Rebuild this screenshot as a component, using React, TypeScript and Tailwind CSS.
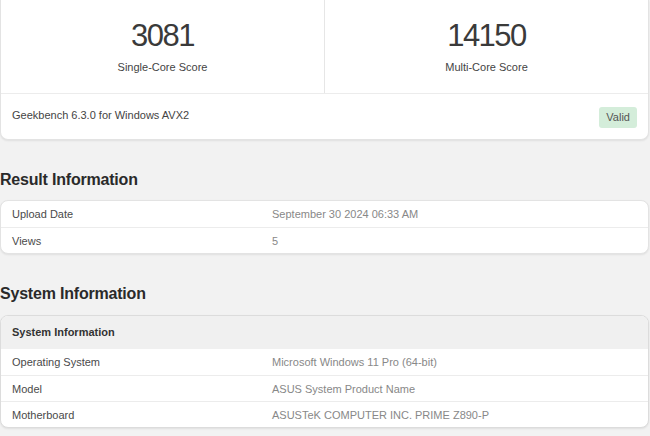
import React from 'react'

const FONT = { fontFamily: '"Liberation Sans", Arial, sans-serif' }

const resultRows = [
  { label: 'Upload Date', value: 'September 30 2024 06:33 AM' },
  { label: 'Views', value: '5' },
]

const systemRows = [
  { label: 'Operating System', value: 'Microsoft Windows 11 Pro (64-bit)' },
  { label: 'Model', value: 'ASUS System Product Name' },
  { label: 'Motherboard', value: 'ASUSTeK COMPUTER INC. PRIME Z890-P' },
]

function Score({ value, label }: { value: string; label: string }) {
  return (
    <div className="flex-1 flex flex-col items-center pt-[20px]">
      <div className="text-[31px] leading-[31px] tracking-[-1.5px] text-[#3a3a3a]">{value}</div>
      <div className="mt-[9px] text-[11px] leading-[14px] text-[#444]">{label}</div>
    </div>
  )
}

function InfoRow({ label, value, first }: { label: string; value: string; first?: boolean }) {
  return (
    <div
      className={`flex items-center h-[26px] text-[11px] leading-[14px] ${first ? '' : 'border-t border-[#ececec]'}`}
    >
      <div className="w-[271px] pl-[11px] text-[#4a4a4a]">{label}</div>
      <div className="text-[#888]">{value}</div>
    </div>
  )
}

export default function App() {
  return (
    <div className="min-h-[436px] bg-[#f2f2f2] pr-[1px]" style={FONT}>
      {/* Score card */}
      <div className="bg-white rounded-b-lg border-b border-x border-[#e3e3e3] shadow-[0_1px_2px_rgba(0,0,0,0.08)]">
        <div className="flex h-[94px] border-b border-[#ececec]">
          <Score value="3081" label="Single-Core Score" />
          <div className="w-px bg-[#e6e6e6]" />
          <Score value="14150" label="Multi-Core Score" />
        </div>
        <div className="flex justify-between items-start h-[45px] pl-[11px] pr-[11px] pt-[13px]">
          <span className="mt-[1px] text-[11px] leading-[14px] text-[#444]">
            Geekbench 6.3.0 for Windows AVX2
          </span>
          <span className="h-[21px] px-[7px] flex items-center rounded-[3px] bg-[#d4edda] text-[11px] text-[#555]">
            Valid
          </span>
        </div>
      </div>

      {/* Result Information */}
      <h2 className="mt-[30px] text-[16px] leading-[20px] font-bold text-[#2a2a2a] tracking-[-0.2px]">
        Result Information
      </h2>
      <div className="mt-[10px] bg-white rounded-lg border border-[#e3e3e3] shadow-[0_1px_2px_rgba(0,0,0,0.08)] overflow-hidden">
        {resultRows.map((r, i) => (
          <InfoRow key={r.label} label={r.label} value={r.value} first={i === 0} />
        ))}
      </div>

      {/* System Information */}
      <h2 className="mt-[30px] text-[16px] leading-[20px] font-bold text-[#2a2a2a] tracking-[-0.2px]">
        System Information
      </h2>
      <div className="mt-[11px] bg-white rounded-lg border border-[#dcdcdc] shadow-[0_1px_2px_rgba(0,0,0,0.08)] overflow-hidden">
        <div className="h-[33px] flex items-center pl-[11px] bg-[#f0f0f0] text-[11px] font-bold text-[#333]">
          System Information
        </div>
        {systemRows.map((r, i) => (
          <InfoRow key={r.label} label={r.label} value={r.value} first={i === 0} />
        ))}
      </div>
    </div>
  )
}
